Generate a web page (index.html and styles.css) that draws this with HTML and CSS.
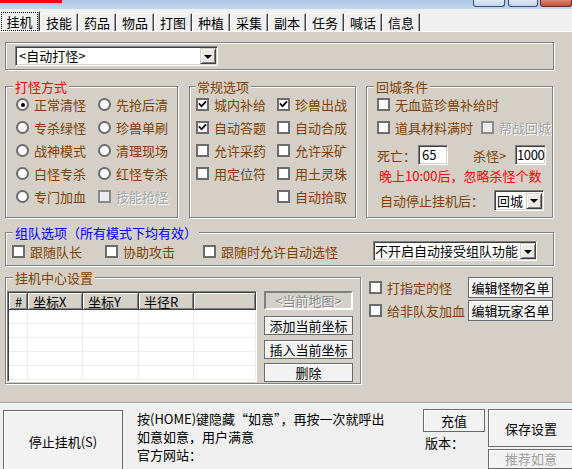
FILE: index.html
```html
<!DOCTYPE html>
<html lang="zh-CN">
<head>
<meta charset="utf-8">
<title>挂机</title>
<link rel="stylesheet" href="styles.css">
</head>
<body>
<div class="titlebar">
  <div class="redbar"></div>
  <div class="winbtns"><span class="wb w1"></span><span class="wb w2"></span><span class="wb close"></span></div>
</div>
<div class="tabs">
  <div class="tab active"><span class="focus">挂机</span></div>
  <div class="tab">技能</div>
  <div class="tab">药品</div>
  <div class="tab">物品</div>
  <div class="tab">打图</div>
  <div class="tab">种植</div>
  <div class="tab">采集</div>
  <div class="tab">副本</div>
  <div class="tab">任务</div>
  <div class="tab">喊话</div>
  <div class="tab">信息</div>
</div>
<div class="panel">
  <fieldset class="grp grp-top">
    <div class="combo combo-main"><span class="combo-text">&lt;自动打怪&gt;</span><span class="arrow"><i></i></span></div>
  </fieldset>

  <div class="grp-row">
    <fieldset class="grp g1"><legend class="red">打怪方式</legend>
      <div class="g1grid">
        <div class="opt"><span class="radio on"></span>正常清怪</div>
        <div class="opt"><span class="radio"></span>先抢后清</div>
        <div class="opt"><span class="radio"></span>专杀绿怪</div>
        <div class="opt"><span class="radio"></span>珍兽单刷</div>
        <div class="opt"><span class="radio"></span>战神模式</div>
        <div class="opt"><span class="radio"></span>清理现场</div>
        <div class="opt"><span class="radio"></span>白怪专杀</div>
        <div class="opt"><span class="radio"></span>红怪专杀</div>
        <div class="opt"><span class="radio"></span>专门加血</div>
        <div class="opt dis"><span class="cb dis"></span>技能抢怪</div>
      </div>
    </fieldset>
    <fieldset class="grp g2"><legend class="brown g2leg">常规选项</legend>
      <div class="g2grid">
        <div class="opt"><span class="cb"><svg viewBox="0 0 9 9"><polyline points="1.5,4 3.5,6.2 7.5,2"/></svg></span>城内补给</div>
        <div class="opt"><span class="cb"><svg viewBox="0 0 9 9"><polyline points="1.5,4 3.5,6.2 7.5,2"/></svg></span>珍兽出战</div>
        <div class="opt"><span class="cb"><svg viewBox="0 0 9 9"><polyline points="1.5,4 3.5,6.2 7.5,2"/></svg></span>自动答题</div>
        <div class="opt"><span class="cb"></span>自动合成</div>
        <div class="opt"><span class="cb"></span>允许采药</div>
        <div class="opt"><span class="cb"></span>允许采矿</div>
        <div class="opt"><span class="cb"></span>用定位符</div>
        <div class="opt"><span class="cb"></span>用土灵珠</div>
        <div class="opt"></div>
        <div class="opt"><span class="cb"></span>自动拾取</div>
      </div>
    </fieldset>
    <fieldset class="grp g3"><legend class="brown">回城条件</legend>
      <div class="g3body">
        <div class="opt"><span class="cb"></span>无血蓝珍兽补给时</div>
        <div class="line">
          <div class="opt w104"><span class="cb"></span>道具材料满时</div>
          <div class="opt dis"><span class="cb dis"></span>帮战回城</div>
        </div>
        <div class="line nums">
          <span class="lbl l-death">死亡：</span>
          <span class="edit e-death">65</span>
          <span class="lbl l-kill">杀怪&gt;</span>
          <span class="edit e-kill">1000</span>
        </div>
        <div class="redline">晚上10:00后，忽略杀怪个数</div>
        <div class="line stopline">
          <span class="lbl l-stop">自动停止挂机后：</span>
          <div class="combo combo-city"><span class="combo-text">回城</span><span class="arrow"><i></i></span></div>
        </div>
      </div>
    </fieldset>
  </div>

  <fieldset class="grp g-team"><legend class="blue">组队选项（所有模式下均有效）</legend>
    <div class="team-row">
      <div class="opt t1"><span class="cb"></span>跟随队长</div>
      <div class="opt t2"><span class="cb"></span>协助攻击</div>
      <div class="opt t3"><span class="cb"></span>跟随时允许自动选怪</div>
      <div class="combo combo-team"><span class="combo-text">不开启自动接受组队功能</span><span class="arrow"><i></i></span></div>
    </div>
  </fieldset>

  <div class="center-row">
    <fieldset class="grp g-center"><legend class="brown">挂机中心设置</legend>
      <div class="center-body">
        <div class="list">
          <table>
            <colgroup><col class="c0"><col class="c1"><col class="c2"><col class="c3"><col></colgroup>
            <thead><tr><th>#</th><th>坐标X</th><th>坐标Y</th><th>半径R</th><th></th></tr></thead>
            <tbody>
              <tr><td></td><td></td><td></td><td></td><td></td></tr>
              <tr><td></td><td></td><td></td><td></td><td></td></tr>
              <tr><td></td><td></td><td></td><td></td><td></td></tr>
              <tr><td></td><td></td><td></td><td></td><td></td></tr>
              <tr><td></td><td></td><td></td><td></td><td></td></tr>
            </tbody>
          </table>
        </div>
        <div class="btn-col">
          <div class="btn btn-map">&lt;当前地图&gt;</div>
          <div class="btn b-add">添加当前坐标</div>
          <div class="btn b-ins">插入当前坐标</div>
          <div class="btn b-del">删除</div>
        </div>
      </div>
    </fieldset>
    <div class="right-opts">
      <div class="ropt">
        <div class="opt rlabel"><span class="cb"></span>打指定的怪</div>
        <div class="btn rbtn">编辑怪物名单</div>
      </div>
      <div class="ropt r2">
        <div class="opt rlabel"><span class="cb"></span>给非队友加血</div>
        <div class="btn rbtn">编辑玩家名单</div>
      </div>
    </div>
  </div>
</div>
<div class="footer">
  <div class="btn stop">停止挂机(S)</div>
  <div class="notes">
    <div>按(HOME)键隐藏“如意”，再按一次就呼出</div>
    <div>如意如意，用户满意</div>
    <div>官方网站：</div>
  </div>
  <div class="fcol1">
    <div class="btn charge">充值</div>
    <div class="ver">版本：</div>
  </div>
  <div class="fcol2">
    <div class="btn save">保存设置</div>
    <div class="btn rec">推荐如意</div>
  </div>
</div>
</body>
</html>
```

FILE: styles.css
```css
* { box-sizing: border-box; }
html, body { margin: 0; padding: 0; }
body {
  width: 572px;
  height: 469px;
  overflow: hidden;
  background: #f0f0f0;
  font-family: "Noto Sans CJK SC", "Liberation Sans", sans-serif;
  font-size: 13px;
  line-height: 13px;
  color: #000;
}

/* title strip */
.titlebar {
  height: 9px;
  display: flex;
  justify-content: space-between;
  align-items: flex-start;
  background: linear-gradient(#a9c3e3, #c5d8ee);
}
.redbar { width: 62px; height: 3px; background: #ff0000; }
.winbtns { display: flex; }
.wb {
  height: 7px;
  border: 1px solid #3d5073;
  border-top: none;
  border-radius: 0 0 3px 3px;
  background: linear-gradient(#dfe9f5, #c3d4ea);
}
.w1 { width: 32px; }
.w2 { width: 30px; margin-left: 3px; }
.wb.close { width: 32px; margin-left: 2px; background: linear-gradient(#d98571, #c24f3b); border-color: #6b2a20; }

/* tabs */
.tabs {
  height: 22px;
  display: flex;
  align-items: flex-end;
  background: #f0f0f0;
}
.tab {
  width: 38px;
  height: 18px;
  border-top: 1px solid #fff;
  border-left: 1px solid #fff;
  border-right: 1px solid #404040;
  box-shadow: inset -1px 0 0 #a0a0a0;
  display: flex;
  align-items: center;
  justify-content: center;
  background: #f0f0f0;
}
.tab.active { width: 40px; height: 20px; border-left: none; }
.focus { outline: 1px dotted #000; padding: 2px 4px; }

/* main panel */
.panel {
  height: 371px;
  background: #d4d0c8;
  border-top: 1px solid #fff;
  padding-left: 5px;
  display: flex;
  flex-direction: column;
  align-items: flex-start;
}

.grp {
  margin: 0;
  padding: 0;
  min-width: 0;
  border: 1px solid #808080;
  box-shadow: 1px 1px 0 #fff, inset 1px 1px 0 #fff;
}
.grp legend {
  padding: 0 2px;
  margin-left: 7px;
  height: 13px;
  line-height: 13px;
  background: #d4d0c8;
}
.grp legend.g2leg { margin-left: 5px; }
.red { color: #ff0000; }
.blue { color: #0000ff; }
.brown { color: #804000; }

.grp-top {
  width: 549px;
  margin-top: 10px;
  padding: 3px 0 3px 9px;
}

/* combo boxes and edits */
.combo, .edit {
  display: flex;
  align-items: center;
  height: 20px;
  background: #fff;
  border: 1px solid;
  border-color: #808080 #fff #fff #808080;
  box-shadow: inset 1px 1px 0 #404040, inset -1px -1px 0 #d4d0c8;
  color: #000;
  white-space: nowrap;
  line-height: 16px;
}
.combo-text {
  padding-left: 3px;
  flex: 1;
  min-width: 0;
  line-height: 16px;
  white-space: nowrap;
}
.arrow {
  flex: none;
  width: 16px;
  height: 16px;
  margin-right: 1px;
  background: #ece9e4;
  border: 1px solid;
  border-color: #d4d0c8 #404040 #404040 #d4d0c8;
  box-shadow: inset 1px 1px 0 #fff, inset -1px -1px 0 #808080;
  display: flex;
  align-items: center;
  justify-content: center;
}
.arrow i {
  width: 0;
  height: 0;
  border-left: 4px solid transparent;
  border-right: 4px solid transparent;
  border-top: 4px solid #000;
  margin-top: 1px;
}
.combo-main { width: 203px; }

/* three groups row */
.grp-row {
  display: flex;
  height: 138px;
  margin-top: 10px;
}
.g1 { width: 173px; }
.g2 { width: 167px; margin-left: 11px; }
.g3 { width: 187px; margin-left: 10px; }

.opt {
  display: flex;
  align-items: center;
  gap: 5px;
  height: 23px;
  color: #804000;
  white-space: nowrap;
}
.opt.dis { color: #a4a4a4; text-shadow: 1px 1px 0 #fff; }

.radio {
  flex: none;
  width: 13px;
  height: 13px;
  border-radius: 50%;
  border: 2px solid #6c6c6c;
  background: #fff;
  display: flex;
  align-items: center;
  justify-content: center;
}
.radio.on::after {
  content: "";
  width: 4px;
  height: 4px;
  border-radius: 50%;
  background: #000;
}
.cb {
  flex: none;
  width: 13px;
  height: 13px;
  border: 2px solid #6c6c6c;
  background: #fff;
  display: flex;
  align-items: center;
  justify-content: center;
}
.cb.dis { background: #ececec; border-color: #8a8a8a; }
.cb svg { width: 9px; height: 9px; display: block; }
.cb polyline { fill: none; stroke: #000; stroke-width: 1.7; stroke-linecap: square; }

.g1grid {
  display: grid;
  grid-template-columns: 82px 1fr;
  grid-auto-rows: 23px;
  padding-left: 10px;
}
.g2grid {
  display: grid;
  grid-template-columns: 81px 1fr;
  grid-auto-rows: 23px;
  padding-left: 6px;
}
.g3body {
  display: flex;
  flex-direction: column;
  padding-left: 10px;
}
.line { display: flex; align-items: center; }
.w104 { width: 104px; }
.lbl { color: #804000; white-space: nowrap; }
.nums { height: 20px; margin-top: 6px; }
.l-death { width: 41px; }
.edit { padding-left: 3px; }
.e-death { width: 30px; }
.l-kill { width: 42px; margin-left: 25px; }
.e-kill { width: 31px; padding-left: 1px; letter-spacing: -0.4px; }
.redline { height: 21px; line-height: 21px; margin-left: 2px; color: #ff0000; white-space: nowrap; }
.stopline { height: 21px; margin-top: 4px; }
.l-stop { width: 114px; margin-left: 3px; }
.combo-city { width: 50px; height: 21px; }
.combo-city .combo-text { padding-left: 2px; }

/* team group */
.g-team { width: 549px; margin-top: 8px; }
.team-row {
  display: flex;
  align-items: center;
  height: 20px;
  margin: 2px 0 4px;
  padding-left: 6px;
}
.team-row .opt { height: 20px; }
.t1 { width: 93px; }
.t2 { width: 98px; }
.t3 { width: 170px; }
.combo-team { width: 164px; }
.combo-team .combo-text { padding-left: 1px; }
.combo-team .arrow { margin-right: 0; }

/* center settings */
.center-row { display: flex; margin-top: 5px; }
.g-center { width: 356px; }
.center-body {
  display: flex;
  padding: 7px 0 1px 1px;
}
.list {
  width: 250px;
  height: 91px;
  background: #fff;
  border: 1px solid;
  border-color: #808080 #fff #fff #808080;
  box-shadow: inset 1px 1px 0 #404040;
  padding: 1px 0 0 1px;
  overflow: hidden;
}
.list table {
  width: 100%;
  table-layout: fixed;
  border-collapse: separate;
  border-spacing: 0;
}
.c0 { width: 19px; }
.c1 { width: 55px; }
.c2 { width: 56px; }
.c3 { width: 55px; }
.list th {
  height: 17px;
  padding: 0 0 0 5px;
  font-weight: normal;
  text-align: left;
  background: #d4d0c8;
  border-right: 1px solid #404040;
  border-bottom: 1px solid #404040;
  box-shadow: inset 1px 1px 0 #fff, inset -1px -1px 0 #808080;
  white-space: nowrap;
  color: #000;
}
.list th:first-child { padding-left: 6px; }
.list td {
  height: 14px;
  padding: 0;
  border-right: 1px solid #ececec;
  border-bottom: 1px solid #ececec;
}

.btn {
  display: flex;
  align-items: center;
  justify-content: center;
  background: #f2f2f2;
  border: 1px solid #6a6a6a;
  box-shadow: inset 1px 1px 0 #fff;
  color: #000;
  white-space: nowrap;
}
.btn-col {
  display: flex;
  flex-direction: column;
  width: 89px;
  margin-left: 7px;
}
.btn-col .btn { height: 19px; }
.btn-map {
  background: #d4d0c8;
  border: 2px solid;
  border-color: #808080 #fff #fff #808080;
  box-shadow: none;
  color: #888;
  text-shadow: 1px 1px 0 #fff;
}
.b-add { margin-top: 6px; }
.b-ins { margin-top: 5px; }
.b-del { margin-top: 4px; }

.right-opts { margin-left: 8px; padding-top: 6px; }
.ropt { display: flex; align-items: center; height: 21px; }
.ropt.r2 { margin-top: 2px; }
.rlabel { width: 99px; height: 21px; }
.rbtn { width: 85px; height: 21px; }

/* footer */
.footer {
  height: 67px;
  display: flex;
  align-items: flex-start;
  background: #f0f0f0;
  border-top: 1px solid #a0a0a0;
  box-shadow: inset 0 1px 0 #fff;
  padding-top: 6px;
}
.stop {
  flex: none;
  width: 120px;
  height: 62px;
  margin: 1px 0 0 3px;
}
.notes {
  flex: none;
  width: 286px;
  margin: 1px 0 0 14px;
  line-height: 18px;
  white-space: nowrap;
}
.fcol1 { flex: none; width: 62px; }
.charge { height: 23px; }
.ver { margin: 2px 0 0 2px; line-height: 18px; }
.fcol2 { flex: none; width: 86px; margin-left: 3px; }
.save { height: 38px; }
.rec { height: 20px; margin-top: 2px; color: #a0a0a0; line-height: 16px; }
```
